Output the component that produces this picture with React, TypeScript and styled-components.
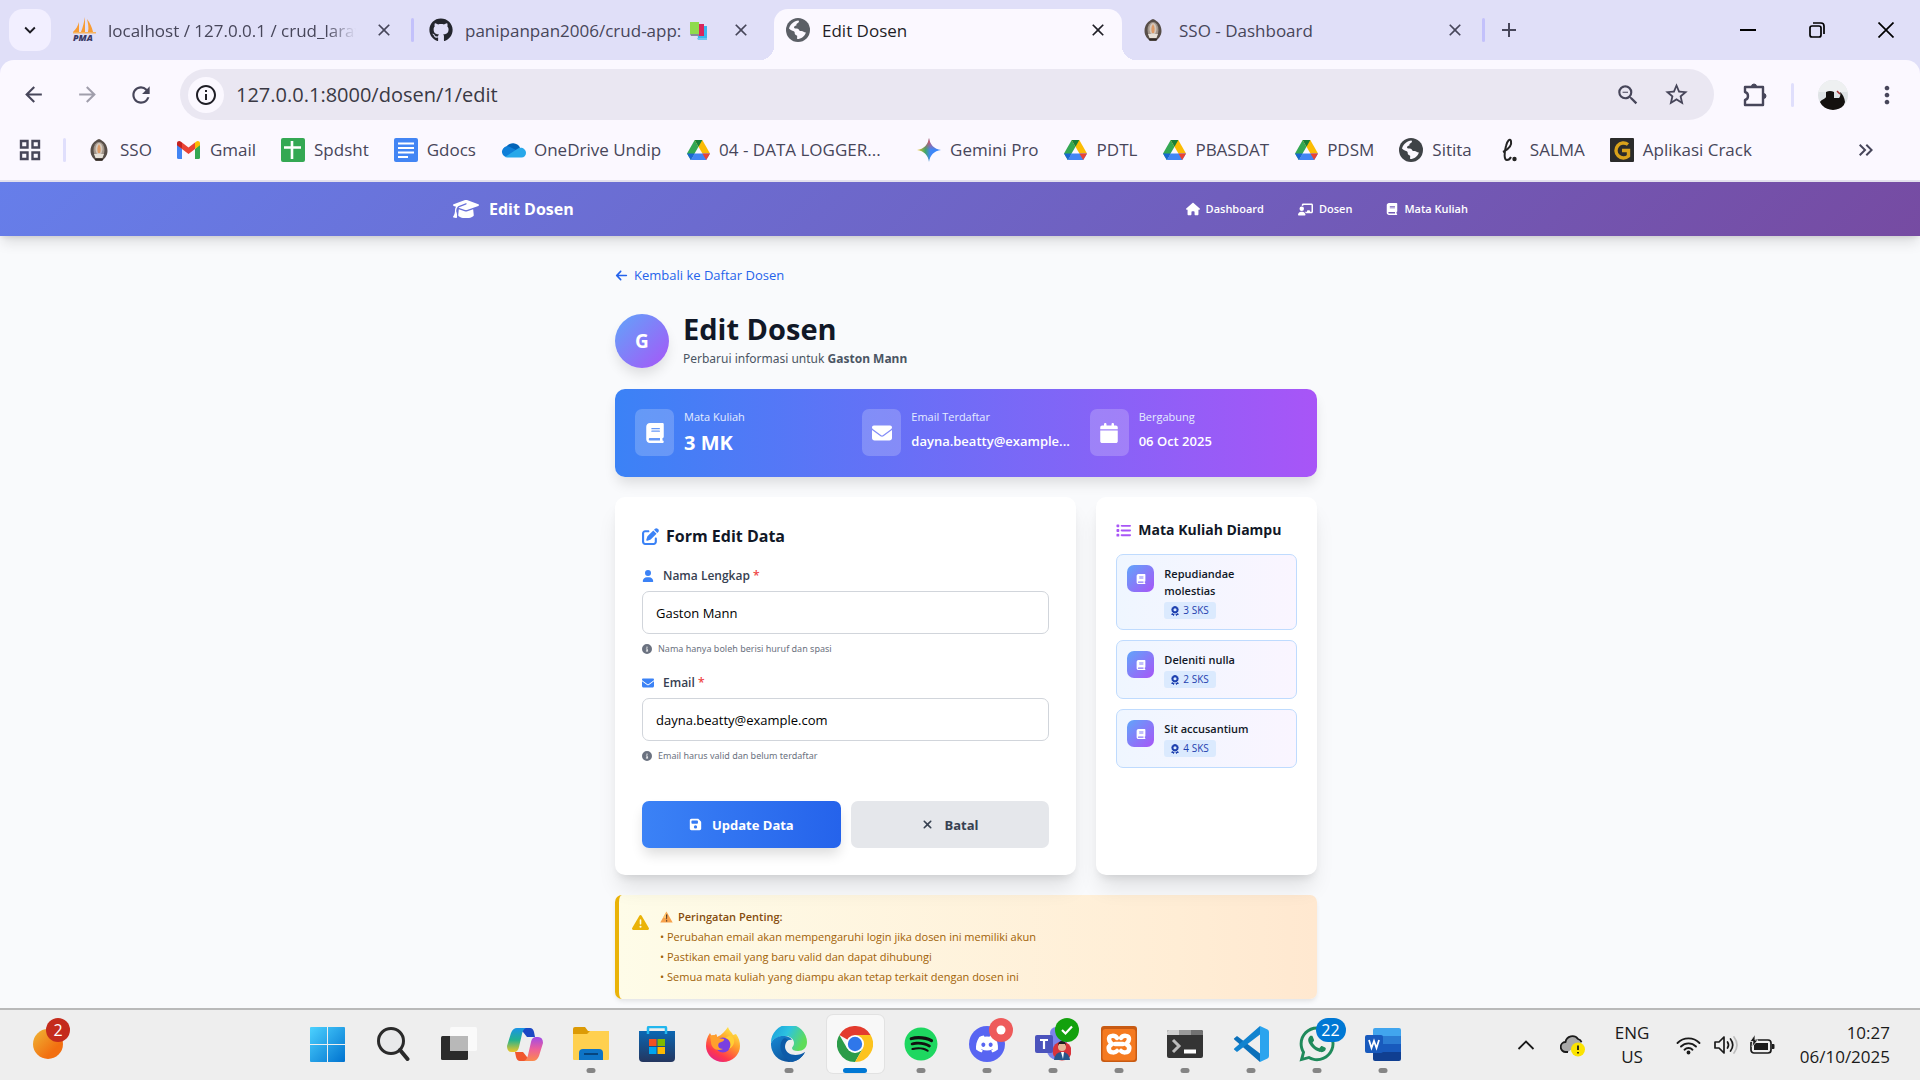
import React, { useState } from "react";
import styled, { createGlobalStyle, css } from "styled-components";
import {
  FaArrowLeft,
  FaAward,
  FaBook,
  FaCalendar,
  FaChalkboardUser,
  FaCircleInfo,
  FaEnvelope,
  FaFloppyDisk,
  FaGraduationCap,
  FaHouse,
  FaList,
  FaPenToSquare,
  FaTriangleExclamation,
  FaUser,
  FaXmark,
} from "react-icons/fa6";
import { FaGithub, FaSpotify, FaDiscord, FaWhatsapp } from "react-icons/fa";
import { SiXampp } from "react-icons/si";
import { VscVscode } from "react-icons/vsc";
import {
  MdArrowBack,
  MdArrowForward,
  MdClose,
  MdAdd,
  MdInfoOutline,
  MdMoreVert,
  MdRefresh,
  MdStarBorder,
  MdOutlineZoomOut,
  MdKeyboardArrowDown,
  MdKeyboardDoubleArrowRight,
} from "react-icons/md";

const uiFont = `"Open Sans", "Noto Sans", sans-serif`;
const wideFont = `"Noto Sans", "Open Sans", sans-serif`;

const GlobalStyle = createGlobalStyle`
  *, *::before, *::after { box-sizing: border-box; }
  body { margin: 0; font-family: ${uiFont}; color: #111827; }
  h1, h2, p, ul, dl, dd, dt { margin: 0; padding: 0; }
  ul { list-style: none; }
  a { color: inherit; text-decoration: none; }
  button { font-family: inherit; color: inherit; border: 0; padding: 0; background: none; cursor: pointer; }
  input { font-family: inherit; }
  svg { display: block; flex: none; }
`;

const Screen = styled.div`
  display: flex;
  flex-direction: column;
  min-height: 100vh;
  overflow: hidden;
`;

/* ---------- browser frame ---------- */

const TabStrip = styled.div`
  display: flex;
  align-items: flex-start;
  height: 60px;
  padding: 9px 0 0 9px;
  background: #e0dff8;
`;

const TabSearch = styled.button`
  display: grid;
  place-items: center;
  width: 42px;
  height: 42px;
  margin-right: 9px;
  border-radius: 14px;
  background: #f2efff;
  color: #1c1b22;
`;

const TabSlot = styled.div`
  display: flex;
  width: 357px;
  height: 51px;
  min-width: 0;
`;

const TabBody = styled.div<{ $active?: boolean }>`
  position: relative;
  display: flex;
  align-items: center;
  width: 348px;
  height: 100%;
  padding: 0 12px 9px 12px;
  color: ${(p) => (p.$active ? "#1f1e26" : "#47465a")};
  ${(p) =>
    p.$active &&
    css`
      background: #fbf8ff;
      border-radius: 14px 14px 0 0;
      &::before,
      &::after {
        content: "";
        position: absolute;
        bottom: 0;
        width: 14px;
        height: 14px;
      }
      &::before {
        left: -14px;
        background: radial-gradient(circle at 0 0, transparent 14px, #fbf8ff 14px);
      }
      &::after {
        right: -14px;
        background: radial-gradient(circle at 100% 0, transparent 14px, #fbf8ff 14px);
      }
    `}
`;

const TabIcon = styled.span`
  display: grid;
  place-items: center start;
  width: 36px;
  height: 26px;
`;

const TabTitle = styled.span<{ $fade?: boolean }>`
  display: flex;
  align-items: center;
  flex: 1;
  min-width: 0;
  gap: 8px;
  overflow: hidden;
  margin-right: 16px;
  padding-top: 2px;
  font-size: 17px;
  line-height: 26px;
  white-space: nowrap;
  ${(p) => p.$fade && "mask-image: linear-gradient(90deg, #000 88%, transparent);"}
`;

const CloseTab = styled.button`
  display: grid;
  place-items: center;
  width: 24px;
  height: 24px;
`;

const TabDivider = styled.span`
  width: 3px;
  height: 24px;
  margin: 9px 0 0 3px;
  border-radius: 2px;
  background: #c3c1fb;
`;

const NewTab = styled.button`
  display: grid;
  place-items: center;
  width: 42px;
  height: 42px;
  color: #47465a;
`;

const WindowControls = styled.div`
  display: flex;
  margin-left: auto;
`;

const WindowButton = styled.button`
  display: grid;
  place-items: center;
  width: 69px;
  height: 42px;
`;

const BrowserPanel = styled.div`
  background: #e0dff8;
`;

const BrowserPanelInner = styled.div`
  border-radius: 14px 14px 0 0;
  border-bottom: 2px solid #e4e1ee;
  background: #fbf8ff;
`;

const Toolbar = styled.div`
  display: flex;
  align-items: center;
  padding: 9px 10px 0 6px;
  color: #47465a;
`;

const ToolButton = styled.button<{ $dim?: boolean }>`
  display: grid;
  place-items: center;
  width: 54px;
  height: 51px;
  opacity: ${(p) => (p.$dim ? 0.5 : 1)};
`;

const SmallToolButton = styled(ToolButton)`
  width: 46px;
`;

const Omnibox = styled.form`
  display: flex;
  align-items: center;
  flex: 1;
  height: 51px;
  margin: 0 18px 0 12px;
  padding: 0 14px 0 8px;
  border-radius: 26px;
  background: #eae7f2;
`;

const SiteInfo = styled.button`
  display: grid;
  place-items: center;
  width: 36px;
  height: 36px;
  margin-right: 12px;
  border-radius: 50%;
  background: #fbf8ff;
  color: #1f1e26;
`;

const Address = styled.input`
  flex: 1;
  min-width: 0;
  padding: 0;
  border: 0;
  outline: 0;
  background: transparent;
  color: #3a3944;
  font-size: 20px;
  line-height: 26px;
`;

const OmniButton = styled.button`
  display: grid;
  place-items: center;
  width: 48px;
  height: 36px;
`;

const BarDivider = styled.span<{ $before: number; $after: number }>`
  width: 3px;
  height: 24px;
  margin: 0 ${(p) => p.$after}px 0 ${(p) => p.$before}px;
  border-radius: 2px;
  background: #e0dffc;
`;

const ProfileButton = styled.button`
  width: 30px;
  height: 30px;
  margin-right: 16px;
  border-radius: 50%;
  overflow: hidden;
`;

const BookmarkBar = styled.nav`
  display: flex;
  align-items: center;
  height: 60px;
  padding: 0 42px 0 18px;
  color: #47465a;
`;

const BookmarkList = styled.ul`
  display: flex;
  flex: 1;
  gap: 25px;
  min-width: 0;
`;

const BookmarkLink = styled.a<{ $capped?: boolean }>`
  display: flex;
  align-items: center;
  gap: 9px;
  ${(p) => p.$capped && "width: 206px;"}
  font-size: 17px;
  line-height: 24px;
  white-space: nowrap;
`;

const BookmarkIcon = styled.span`
  display: grid;
  place-items: center;
  width: 24px;
  height: 24px;
`;

/* ---------- page ---------- */

const Page = styled.div`
  display: flex;
  flex-direction: column;
  flex: 1;
  background: #f9fafc;
`;

const SiteNav = styled.nav`
  background: linear-gradient(135deg, #667eea 0%, #764ba2 100%);
  box-shadow: 0 8px 13px -2px rgba(0, 0, 0, 0.12), 0 3px 5px -2px rgba(0, 0, 0, 0.1);
  color: #ffffff;
`;

const SiteNavInner = styled.div`
  display: flex;
  align-items: center;
  justify-content: space-between;
  max-width: 1072px;
  height: 54px;
  margin: 0 auto;
  padding: 0 28px 0 29px;
`;

const Brand = styled.a`
  display: flex;
  align-items: center;
  gap: 10px;
  font-size: 16px;
  font-weight: 700;
  line-height: 24px;
`;

const NavLinks = styled.ul`
  display: flex;
  gap: 34px;
`;

const NavLink = styled.a`
  display: flex;
  align-items: center;
  gap: 6px;
  font-size: 11px;
  font-weight: 600;
  line-height: 20px;
`;

const Main = styled.main`
  width: 100%;
  max-width: 714px;
  margin: 0 auto;
  padding: 29px 0 7px 12px;
`;

const BackLink = styled.a`
  display: flex;
  align-items: center;
  gap: 6px;
  width: max-content;
  color: #2563eb;
  font-size: 13px;
  font-weight: 500;
  line-height: 20px;
`;

const PageHeader = styled.header`
  display: flex;
  align-items: center;
  gap: 14px;
  margin-top: 27px;
`;

const Avatar = styled.div`
  display: grid;
  place-items: center;
  width: 54px;
  height: 54px;
  border-radius: 50%;
  background: linear-gradient(135deg, #60a5fa, #a855f7);
  box-shadow: 0 8px 13px -2px rgba(0, 0, 0, 0.12);
  color: #ffffff;
  font-size: 19px;
  font-weight: 700;
`;

const Title = styled.h1`
  font-size: 29px;
  font-weight: 700;
  line-height: 34px;
`;

const Subtitle = styled.p`
  margin-top: 3px;
  color: #4b5563;
  font-family: ${wideFont};
  font-size: 12px;
  line-height: 20px;
`;

const StatsBar = styled.dl`
  display: grid;
  grid-template-columns: repeat(3, minmax(0, 1fr));
  gap: 20px;
  margin-top: 20px;
  padding: 20px;
  border-radius: 10px;
  background: linear-gradient(90deg, #3b82f6, #a855f7);
  box-shadow: 0 8px 13px -2px rgba(0, 0, 0, 0.12);
  color: #ffffff;
`;

const Stat = styled.div`
  display: grid;
  grid-template-columns: auto minmax(0, 1fr);
  column-gap: 10px;
  align-items: start;
`;

const StatIcon = styled.span`
  display: grid;
  place-items: center;
  width: 39px;
  height: 47px;
  border-radius: 7px;
  background: rgba(255, 255, 255, 0.2);
`;

const StatLabel = styled.dt`
  margin-bottom: 4px;
  color: #e4ecff;
  font-size: 11px;
  line-height: 16px;
`;

const StatValue = styled.dd<{ $large?: boolean }>`
  font-size: ${(p) => (p.$large ? 20 : 13)}px;
  font-weight: ${(p) => (p.$large ? 700 : 600)};
  line-height: ${(p) => (p.$large ? 28 : 24)}px;
  white-space: nowrap;
`;

const Columns = styled.div`
  display: grid;
  grid-template-columns: repeat(3, minmax(0, 1fr));
  gap: 20px;
  margin-top: 20px;
`;

const cardStyle = css`
  border-radius: 10px;
  background: #ffffff;
  box-shadow: 0 16px 21px -4px rgba(0, 0, 0, 0.1), 0 6px 8px -4px rgba(0, 0, 0, 0.1);
`;

const FormCard = styled.form`
  ${cardStyle}
  grid-column: span 2;
  padding: 26px 27px 27px;
`;

const SideCard = styled.section`
  ${cardStyle}
  padding: 20px;
`;

const CardTitle = styled.h2`
  display: flex;
  align-items: center;
  gap: 7px;
  font-size: 16px;
  font-weight: 700;
  line-height: 26px;
`;

const SideTitle = styled(CardTitle)`
  margin-bottom: 11px;
  font-size: 14px;
`;

const Field = styled.div`
  margin-top: 16px;

  ${CardTitle} + & {
    margin-top: 17px;
  }
`;

const FieldLabel = styled.label`
  display: flex;
  align-items: center;
  gap: 9px;
  margin-bottom: 5px;
  color: #374151;
  font-size: 12px;
  font-weight: 600;
  line-height: 20px;
`;

const Required = styled.span`
  color: #ef4444;
`;

const TextInput = styled.input`
  width: 100%;
  height: 43px;
  padding: 0 13px;
  border: 1px solid #d1d5db;
  border-radius: 7px;
  outline: 0;
  background: #ffffff;
  color: #000000;
  font-size: 13px;
  line-height: 20px;
`;

const Help = styled.p`
  display: flex;
  align-items: center;
  gap: 6px;
  margin-top: 7px;
  color: #6b7280;
  font-family: ${wideFont};
  font-size: 9px;
  line-height: 16px;
`;

const Actions = styled.div`
  display: grid;
  grid-template-columns: 1fr 1fr;
  gap: 10px;
  margin-top: 37px;
`;

const ActionButton = styled.button<{ $primary?: boolean }>`
  display: flex;
  align-items: center;
  justify-content: center;
  gap: 10px;
  height: 47px;
  border-radius: 7px;
  font-size: 13px;
  font-weight: 700;
  line-height: 20px;
  ${(p) =>
    p.$primary
      ? css`
          background: linear-gradient(90deg, #3b82f6, #2563eb);
          box-shadow: 0 8px 13px -2px rgba(0, 0, 0, 0.14);
          color: #ffffff;
        `
      : css`
          background: #e5e7eb;
          color: #374151;
        `}
`;

const CourseList = styled.ul`
  display: grid;
  gap: 10px;
`;

const Course = styled.li`
  display: flex;
  align-items: flex-start;
  gap: 10px;
  padding: 10px;
  border: 1px solid #bfdbfe;
  border-radius: 7px;
  background: linear-gradient(90deg, #eff6ff, #faf5ff);
`;

const CourseIcon = styled.span`
  display: grid;
  place-items: center;
  flex: none;
  width: 27px;
  height: 27px;
  border-radius: 7px;
  background: linear-gradient(135deg, #60a5fa, #a855f7);
  color: #ffffff;
`;

const CourseName = styled.p`
  font-size: 11px;
  font-weight: 600;
  line-height: 17px;
`;

const Credits = styled.span`
  display: flex;
  align-items: center;
  gap: 3px;
  width: max-content;
  height: 17px;
  margin-top: 3px;
  padding: 0 7px 0 6px;
  border-radius: 3px;
  background: #dbeafe;
  color: #1e40af;
  font-size: 10px;
  font-weight: 500;
  line-height: 17px;
`;

const Warning = styled.aside`
  display: flex;
  gap: 11px;
  margin-top: 20px;
  padding: 12px 13px;
  border-left: 4px solid #eab308;
  border-radius: 7px;
  background: linear-gradient(90deg, #fefce8, #ffedd5 80%, #ffe8d0);
  box-shadow: 0 3px 5px -1px rgba(0, 0, 0, 0.1);
  color: #a16207;
  font-size: 11px;
  line-height: 20px;
`;

const WarningIcon = styled.span`
  margin-top: 7px;
  color: #eab308;
`;

const WarningTitle = styled.p`
  display: flex;
  align-items: center;
  gap: 5px;
  color: #854d0e;
  font-weight: 600;
`;

/* ---------- taskbar ---------- */

const Taskbar = styled.footer`
  display: flex;
  height: 72px;
  border-top: 2px solid #b9b9b9;
  background: #eeeeee;
  color: #1a1a1a;
`;

const WidgetArea = styled.div`
  width: 294px;
  padding: 7px 0 0 30px;
`;

const AppList = styled.ul`
  display: flex;
`;

const AppSlot = styled.li`
  display: flex;
  justify-content: center;
  width: 66px;
  padding-top: 5px;
`;

const AppButton = styled.button<{ $active?: boolean }>`
  position: relative;
  display: grid;
  place-items: center;
  width: 57px;
  height: 58px;
  border-radius: 6px;
  ${(p) => p.$active && "background: #f8f8f8; box-shadow: 0 0 0 1px #e2e2e2;"}
`;

const Indicator = styled.span<{ $active?: boolean }>`
  position: absolute;
  bottom: 0;
  left: 50%;
  width: ${(p) => (p.$active ? 24 : 9)}px;
  height: 5px;
  border-radius: 3px;
  background: ${(p) => (p.$active ? "#0078d4" : "#858585")};
  transform: translateX(-50%);
`;

const Badge = styled.span<{ $color: string; $wide?: boolean }>`
  position: absolute;
  top: 3px;
  right: ${(p) => (p.$wide ? 0 : 3)}px;
  display: grid;
  place-items: center;
  width: ${(p) => (p.$wide ? 30 : 24)}px;
  height: 24px;
  border-radius: 12px;
  background: ${(p) => p.$color};
  color: #ffffff;
  font-size: 16px;
  line-height: 24px;
`;

const WidgetButton = styled.button`
  position: relative;
  display: block;
  width: 43px;
  height: 46px;
`;

const WidgetBadge = styled(Badge)`
  top: 1px;
`;

const Tray = styled.div`
  display: flex;
  align-items: center;
  margin-left: auto;
  padding-right: 30px;
`;

const TrayButton = styled.button<{ $width: number }>`
  display: grid;
  place-items: center;
  width: ${(p) => p.$width}px;
  height: 48px;
`;

const TrayText = styled.button<{ $width: number; $end?: boolean }>`
  width: ${(p) => p.$width}px;
  font-size: 17px;
  line-height: 24px;
  text-align: ${(p) => (p.$end ? "right" : "center")};
`;

/* ---------- drawings ---------- */

const CrestIcon = () => (
  <svg width="20" height="24" viewBox="0 0 20 24">
    <path d="M10 1C15 3 18.500 7 18.500 13c0 5-3.500 8-5.500 10H7c-2-2-5.500-5-5.500-10C1.500 7 5 3 10 1Z" fill="#574e48" />
    <ellipse cx="10" cy="12" rx="5.500" ry="8" fill="#a3978c" />
    <ellipse cx="10" cy="11" rx="3.500" ry="6" fill="#d3c8bc" />
    <path d="M10 6c2 3 2 6 1 9H9C8 12 8 9 10 6Z" fill="#dd9a66" />
    <path d="M5 16h10l-1.500 4h-7z" fill="#e7e1d8" />
    <path d="M6 21.500h8" stroke="#2f2926" strokeWidth="1.500" />
  </svg>
);

const PmaIcon = () => (
  <svg width="26" height="26" viewBox="0 0 26 26">
    <path d="M13 0v15H9C11 10 12 5 13 0Z M15 2c3 4 5 8 6 13h-5C17 11 16 6 15 2Z M7 5v10H1C4 12 6 9 7 5Z" fill="#f89c33" />
    <path d="M1 15h23v1.500H1z" fill="#f6b35f" />
    <text x="1" y="24" fontFamily="Open Sans, sans-serif" fontWeight="800" fontStyle="italic" fontSize="9" fill="#3b3a66">
      PMA
    </text>
  </svg>
);

const BooksIcon = () => (
  <svg width="19" height="20" viewBox="0 0 19 20">
    <path d="M8 5h10v13H9z" fill="#38b6ef" />
    <path d="M5 3h10v12H6z" fill="#d8265c" />
    <path d="M1 1h9v12H1z" fill="#8fdb4d" />
    <path d="M1 13h9v2H2z" fill="#888b9a" />
    <path d="M8 17h10v2H9z" fill="#6cc6f0" />
  </svg>
);

const GlobeIcon = ({ color, land }: { color: string; land: string }) => (
  <svg width="24" height="24" viewBox="0 0 24 24">
    <circle cx="12" cy="12" r="12" fill={color} />
    <path
      d="M3 10.500C4.500 6 8 3 12.500 2.600c1 .9.400 1.900-.6 2.400-1.400.6-1.600 1.400-1.500 2.500-1.600.3-2.500 1-2.300 2.500.8.900 4 .1 4.700 1.400.6 1.200 1.200 1.700 2.700 1.500 1.700 0 2.300 1.500 4.400 1.700-1.300 4-4.600 6.500-8.700 6.500-.3-1.300.2-2.200-.1-3.300-1-1-2.600-1.100-2.400-2.800.1-1.200-.5-1.700-1.700-2.100C5.500 12.500 4 11.500 3 10.500Z"
      fill={land}
    />
  </svg>
);

const GmailIcon = () => (
  <svg width="23" height="18" viewBox="0 0 23 18">
    <path d="M0 3v13.500Q0 18 1.500 18H5V8Z" fill="#4285f4" />
    <path d="M23 3v13.500q0 1.500-1.500 1.500H18V8Z" fill="#34a853" />
    <path d="M18 1.500V8l5-3.800V2.500C23 0 20.500-.5 19 .8Z" fill="#fbbc04" />
    <path d="M0 4.200 5 8V1.500L4 .8C2.500-.5 0 0 0 2.500Z" fill="#c5221f" />
    <path d="M5 1.500 11.500 6.500 18 1.500V8l-6.500 5L5 8Z" fill="#ea4335" />
  </svg>
);

const SheetIcon = () => (
  <svg width="24" height="24" viewBox="0 0 24 24">
    <rect width="24" height="24" rx="2" fill="#34a853" />
    <path d="M11 3v18M3 9.500h17" stroke="#fff" strokeWidth="2.600" />
  </svg>
);

const DocIcon = () => (
  <svg width="24" height="24" viewBox="0 0 24 24">
    <rect width="24" height="24" rx="2" fill="#4285f4" />
    <path d="M4 5.500h16M4 10h16M4 14.500h16M4 19h10" stroke="#fff" strokeWidth="2.200" />
  </svg>
);

const OneDriveIcon = () => (
  <svg width="25" height="16" viewBox="0 0 25 16">
    <path d="M6 15a5.500 5.500 0 0 1-.5-10.500A8 8 0 0 1 19 5.500L13 12Z" fill="#0364b8" />
    <path d="M2 13a5.500 5.500 0 0 1 7-8l10 5-6 5H6Q3.500 15 2 13Z" fill="#0f7fd8" />
    <path d="M4 15l13-8.500c3-2 8 0 8 4.500a4.500 4.500 0 0 1-4.500 4.500H6Z" fill="#28a8ea" />
  </svg>
);

const DriveIcon = () => (
  <svg width="23" height="20" viewBox="0 0 23 20">
    <path d="M7.700 0 0 13.500 3.800 20 11.500 6.700Z" fill="#34a853" />
    <path d="M7.700 0h7.600L23 13.500h-7.600Z" fill="#fbbc04" />
    <path d="M7.700 0h7.600l-3.800 6.700Z" fill="#188038" />
    <path d="M7.700 13.500H23L19.200 20H3.800Z" fill="#4285f4" />
    <path d="M0 13.500h7.700L3.800 20Z" fill="#1967d2" />
    <path d="M15.400 13.500H23L19.200 20Z" fill="#ea4335" />
  </svg>
);

const GeminiIcon = () => (
  <svg width="24" height="24" viewBox="0 0 24 24">
    <defs>
      <linearGradient id="gem" x1="0" y1="0" x2="1" y2="0">
        <stop offset="0" stopColor="#f7c51e" />
        <stop offset=".35" stopColor="#3fa66b" />
        <stop offset=".55" stopColor="#4187f5" />
        <stop offset="1" stopColor="#3186ff" />
      </linearGradient>
      <linearGradient id="gemTop" x1="0" y1="0" x2="0" y2="1">
        <stop offset="0" stopColor="#ff4641" />
        <stop offset=".5" stopColor="#ff4641" stopOpacity="0" />
      </linearGradient>
    </defs>
    <path d="M12 0c1 7 5 11 12 12-7 1-11 5-12 12-1-7-5-11-12-12C7 11 11 7 12 0Z" fill="url(#gem)" />
    <path d="M12 0c1 7 5 11 12 12-7 1-11 5-12 12-1-7-5-11-12-12C7 11 11 7 12 0Z" fill="url(#gemTop)" />
  </svg>
);

const SalmaIcon = () => (
  <svg width="16" height="24" viewBox="0 0 16 24" fill="none" stroke="#242424" strokeWidth="2">
    <path d="M2 14C8 11 11 7 10 3 9 0 6 3 5 8c-2 7-2 14 1 14 2 0 3-1 4-3" />
    <circle cx="13.500" cy="21" r="1.200" fill="#242424" />
  </svg>
);

const CrackIcon = () => (
  <svg width="24" height="24" viewBox="0 0 24 24">
    <rect width="24" height="24" rx="1" fill="#2b2b2b" />
    <path d="M18 6.500A7.500 7.500 0 1 0 18.500 18V12.500H12" fill="none" stroke="#d9a21b" strokeWidth="3.400" />
  </svg>
);

const AppsGridIcon = () => (
  <svg width="24" height="24" viewBox="0 0 24 24" fill="none" stroke="#47465a" strokeWidth="2.400">
    <path d="M3 3h6.500v6.500H3zM14.500 3H21v6.500h-6.500zM3 14.500h6.500V21H3zM14.500 14.500H21V21h-6.500z" />
  </svg>
);

const ProfilePhoto = () => (
  <svg width="30" height="30" viewBox="0 0 30 30">
    <rect width="30" height="30" fill="#dfe3e6" />
    <path d="M0 0h30v12H0z" fill="#eef0f1" />
    <path d="M2 22c2-3 5-3 6-5V12q4-2 8 0v6h5q2-2 1-6 4 3 5 10l-3 8H5Z" fill="#14110f" />
    <path d="M19 11l3 3" stroke="#a83232" strokeWidth="1.500" />
  </svg>
);

const WarningEmoji = () => (
  <svg width="13" height="12" viewBox="0 0 13 12">
    <path d="M6.500.5 12.700 11.500H.3Z" fill="#f7a14b" />
    <path d="M6.500.5 3 7h3Z" fill="#ffc56a" />
    <path d="M6 3.500h1.300L7 8.300h-.7ZM6 9.300h1.200v1.200H6Z" fill="#4b3428" />
  </svg>
);

const WindowsLogo = () => (
  <svg width="35" height="35" viewBox="0 0 35 35">
    <defs>
      <linearGradient id="win" x1="0" y1="0" x2="1" y2="1">
        <stop offset="0" stopColor="#4cd2ff" />
        <stop offset="1" stopColor="#0072cf" />
      </linearGradient>
    </defs>
    <path d="M1 0h16v17H0V1q0-1 1-1ZM18 0h16q1 0 1 1v16H18ZM0 18h17v17H1q-1 0-1-1ZM18 18h17v16q0 1-1 1H18Z" fill="url(#win)" />
  </svg>
);

const SearchLogo = () => (
  <svg width="34" height="34" viewBox="0 0 34 34">
    <circle cx="15" cy="14" r="12.500" fill="#e8e9ea" stroke="#2a2a2a" strokeWidth="3" />
    <path d="m24 23 7.500 9" stroke="#2a2a2a" strokeWidth="4" strokeLinecap="round" />
  </svg>
);

const TaskViewLogo = () => (
  <svg width="36" height="36" viewBox="0 0 36 36">
    <rect x="0" y="10" width="27" height="24" rx="1.500" fill="#2b2b2b" />
    <rect x="9" y="1" width="27" height="24" rx="1.500" fill="#fbfbfb" opacity=".9" />
    <path d="M9 10h18v15H9z" fill="#b8b8b8" />
  </svg>
);

const CopilotLogo = () => (
  <svg width="36" height="33" viewBox="0 0 36 33">
    <defs>
      <linearGradient id="cpA" x1="0" y1="0" x2="0" y2="1">
        <stop offset="0" stopColor="#1a93e8" />
        <stop offset=".5" stopColor="#22b28f" />
        <stop offset="1" stopColor="#f0c624" />
      </linearGradient>
      <linearGradient id="cpB" x1="0" y1="0" x2="0" y2="1">
        <stop offset="0" stopColor="#a04be8" />
        <stop offset=".5" stopColor="#ec5f9b" />
        <stop offset="1" stopColor="#fb8a4c" />
      </linearGradient>
    </defs>
    <path d="M10 0h13q3 0 4 4l1 5h-8L16 4Z" fill="#1b48c4" />
    <path d="M10 0h9q-3 1-4 6l-3 13q-1 5-5 5H5q-5 0-5-6L4 5Q6 0 10 0Z" fill="url(#cpA)" />
    <path d="M26 33H13q-3 0-4-4l-1-5h8l4 5Z" fill="#f0562d" />
    <path d="M26 33h-9q3-1 4-6l3-13q1-5 5-5h2q5 0 5 6l-4 13q-2 5-6 5Z" fill="url(#cpB)" />
  </svg>
);

const ExplorerLogo = () => (
  <svg width="36" height="34" viewBox="0 0 36 34">
    <path d="M0 2q0-2 2-2h10l3 4h19q2 0 2 2v8H0Z" fill="#dc9a05" />
    <path d="M0 7h14l3-3h19v28q0 1-1 1H1q-1 0-1-1Z" fill="#ffd04f" />
    <path d="M6 33v-7q0-4 4-4h16q4 0 4 4v7Z" fill="#0e74c6" />
    <path d="M11 27h14" stroke="#06457e" strokeWidth="2" />
  </svg>
);

const StoreLogo = () => (
  <svg width="36" height="36" viewBox="0 0 36 36">
    <defs>
      <linearGradient id="store" x1="0" y1="0" x2="0" y2="1">
        <stop offset="0" stopColor="#0b67b3" />
        <stop offset="1" stopColor="#24365f" />
      </linearGradient>
    </defs>
    <path d="M0 5h36v27q0 4-4 4H4q-4 0-4-4Z" fill="url(#store)" />
    <path d="M9 8V2q0-1 1-1h16q1 0 1 1v6" fill="none" stroke="#22b7ee" strokeWidth="2.500" />
    <path d="M10 13h7.500v7H10z" fill="#f25022" />
    <path d="M18.500 13H26v7h-7.500z" fill="#7fba00" />
    <path d="M10 21h7.500v7H10z" fill="#00a4ef" />
    <path d="M18.500 21H26v7h-7.500z" fill="#ffb900" />
  </svg>
);

const FirefoxLogo = () => (
  <svg width="34" height="35" viewBox="0 0 34 35">
    <defs>
      <linearGradient id="ff" x1=".8" y1="0" x2=".2" y2="1">
        <stop offset="0" stopColor="#fff14a" />
        <stop offset=".4" stopColor="#ff9a2b" />
        <stop offset=".75" stopColor="#ff3a4b" />
        <stop offset="1" stopColor="#e0208f" />
      </linearGradient>
    </defs>
    <path d="M22 0c1 4 4 5 5 8l3-1c3 4 4 8 4 12a17 16 0 0 1-34 0c0-5 1-9 4-13l2 4 4-3c1 1 1 2 1 3 5-2 8-6 11-10Z" fill="url(#ff)" />
    <circle cx="17" cy="18" r="7.500" fill="#7a3fe0" />
    <path d="M4 9c3-2 6-1 8 2l6 1c1 2-3 3-5 4-2 3 0 6 4 6-6 3-12-1-12-7Z" fill="#ffa02d" />
    <path d="M19 11c6 1 7 7 4 11 6-3 7-10 2-14Z" fill="#ffcf35" />
  </svg>
);

const EdgeLogo = () => (
  <svg width="36" height="36" viewBox="0 0 36 36">
    <defs>
      <linearGradient id="edTop" x1="0" y1="0" x2="1" y2=".4">
        <stop offset="0" stopColor="#169bdc" />
        <stop offset=".5" stopColor="#2dc3e0" />
        <stop offset="1" stopColor="#5fdc5a" />
      </linearGradient>
      <linearGradient id="edLow" x1="0" y1="0" x2="1" y2="1">
        <stop offset="0" stopColor="#168ad6" />
        <stop offset="1" stopColor="#0b3f86" />
      </linearGradient>
    </defs>
    <path d="M0 17A18 18 0 0 1 36 16c0 6-4 9-9 9-4 0-6-1-6-3 0-1 2-2 2-5 0-4-4-7-9-7C8 10 3 12 0 17Z" fill="url(#edTop)" />
    <path d="M0 17c3-5 7-7 12-7 5 0 8 2 9 4-5-1-8 3-8 8 0 7 6 11 13 9 3-1 6-3 8-5-3 6-9 10-16 10A18 18 0 0 1 0 17Z" fill="url(#edLow)" />
    <path d="M12 13c-4 5-3 12 1 17 2 3 5 5 8 6 5-1 10-4 13-10-7 5-19 4-20-5 0-3 1-5 3-7-2-2-4-2-5-1Z" fill="#0d5ba8" />
  </svg>
);

const ChromeLogo = () => (
  <svg width="36" height="36" viewBox="0 0 36 36">
    <path d="M18 18 2.400 9A18 18 0 0 1 33.600 9Z" fill="#e33b2e" />
    <path d="M2.400 9 10.200 22.500 18 27l3-1-3 10A18 18 0 0 1 2.400 9Z" fill="#2b9c49" />
    <path d="M10.200 22.500 18 27l7.800-4.500L18 36Z" fill="#2b9c49" />
    <path d="M25.800 22.500 18 36A18 18 0 0 0 33.600 9H18Z" fill="#fcc31e" />
    <circle cx="18" cy="18" r="9" fill="#fff" />
    <circle cx="18" cy="18" r="7.200" fill="#2f77ea" />
  </svg>
);

const SpotifyLogo = () => (
  <svg width="34" height="34" viewBox="0 0 34 34">
    <circle cx="17" cy="17" r="15" fill="#111" />
    <FaSpotify size={34} color="#1ed760" />
  </svg>
);

const DiscordLogo = () => (
  <svg width="36" height="36" viewBox="0 0 36 36">
    <circle cx="18" cy="18" r="18" fill="#5865f2" />
    <FaDiscord x="6" y="6" size={24} color="#fff" />
  </svg>
);

const TeamsLogo = () => (
  <svg width="36" height="36" viewBox="0 0 36 36">
    <circle cx="21" cy="7" r="6" fill="#7b83eb" />
    <path d="M12 12h20v12a10 10 0 0 1-20 0Z" fill="#7b83eb" />
    <circle cx="27" cy="25" r="9.500" fill="#d8343b" />
    <circle cx="27" cy="21" r="4" fill="#e6b79b" />
    <path d="M23 20q0-5 4-5t4 5l-1-2h-6Z" fill="#1d1d22" />
    <path d="M19 34q1-8 8-8t8 8Z" fill="#28568c" />
    <path d="M26 26h3l-1 7Z" fill="#fff" />
    <rect x="0" y="9" width="18" height="18" rx="2" fill="#4b53bc" />
    <path d="M5 14h8M9 14v9" stroke="#fff" strokeWidth="2.200" />
  </svg>
);

const XamppLogo = () => (
  <svg width="36" height="36" viewBox="0 0 36 36">
    <rect width="36" height="36" rx="3" fill="#c85a12" />
    <rect x="1.500" y="3" width="33" height="31.500" rx="3" fill="#f57a20" />
    <g fill="none" stroke="#fff" strokeWidth="4.500" strokeLinecap="round" strokeLinejoin="round">
      <path d="M16 12c-2-3-8-3-8 1 0 3 2 4 3 5-2 1-4 3-3 6 1 3 6 3 8 1" />
      <path d="M20 12c2-3 8-3 8 1 0 3-2 4-3 5 2 1 4 3 3 6-1 3-6 3-8 1" />
      <path d="M14 18h8" />
    </g>
  </svg>
);

const TerminalLogo = () => (
  <svg width="36" height="28" viewBox="0 0 36 28">
    <rect width="36" height="28" rx="2" fill="#343434" />
    <path d="M0 2q0-2 2-2h10v5H0Z" fill="#d0d0d0" />
    <path d="M12 0h12v5H12z" fill="#9a9a9a" />
    <path d="M24 0h10q2 0 2 2v3H24Z" fill="#727272" />
    <path d="m6 10 6 6-6 6" fill="none" stroke="#bcbcbc" strokeWidth="3" />
    <path d="M17 21.500h12" stroke="#fff" strokeWidth="4" />
  </svg>
);

const CodeLogo = () => (
  <svg width="36" height="36" viewBox="0 0 36 36">
    <path d="M27 0 8 18l19 18 1-.5V.5Z" fill="#0a6db5" opacity="0" />
    <path d="M1 12.500 4 10l23 17.500V36L1.500 13.800Q.5 13 1 12.500Z" fill="#0b70ba" />
    <path d="M1 23.500 4 26 27 8.500V0L1.500 22.200Q.5 23 1 23.500Z" fill="#1183cf" />
    <path d="M27 0 34.500 3.500Q36 4.200 36 6v24q0 1.800-1.500 2.500L27 36Z" fill="#2ba4ee" />
  </svg>
);

const WhatsappLogo = () => <FaWhatsapp size={40} color="#1f8a5b" />;

const WordLogo = () => (
  <svg width="36" height="33" viewBox="0 0 36 33">
    <path d="M8 2q0-2 2-2h24q2 0 2 2v6H8Z" fill="#41a5ee" />
    <path d="M8 8h28v8H8z" fill="#2b7cd3" />
    <path d="M8 16h28v8H8z" fill="#185abd" />
    <path d="M8 24h28v7q0 2-2 2H10q-2 0-2-2Z" fill="#103f91" />
    <rect x="0" y="7" width="18" height="18" rx="2" fill="#185abd" />
    <path d="m4 12 2.500 8L9 13l2.500 7L14 12" fill="none" stroke="#fff" strokeWidth="1.800" />
  </svg>
);

const WeatherIcon = () => (
  <svg width="43" height="46" viewBox="0 0 43 46">
    <defs>
      <linearGradient id="sun" x1="0" y1="0" x2="1" y2="1">
        <stop offset="0" stopColor="#efb736" />
        <stop offset=".7" stopColor="#f26f10" />
      </linearGradient>
    </defs>
    <circle cx="18" cy="27" r="15" fill="url(#sun)" />
  </svg>
);

const CloudAlertIcon = () => (
  <svg width="26" height="24" viewBox="0 0 26 24">
    <path d="M8 19H6A5 5 0 0 1 5.500 9 7 7 0 0 1 18 6c2 .5 3.500 2 4 4L12 16Z" fill="#a9a9a9" />
    <path d="M8 19H6A5 5 0 0 1 5.500 9 7 7 0 0 1 18 6c2 .5 3 1.500 3.500 3" fill="none" stroke="#1a1a1a" strokeWidth="1.800" />
    <circle cx="18" cy="16.500" r="7" fill="#fbe300" />
    <path d="M18 12.500V17M18 19v1.500" stroke="#1a1a1a" strokeWidth="1.800" />
  </svg>
);

const WifiIcon = () => (
  <svg width="25" height="19" viewBox="0 0 25 19" fill="none" stroke="#1a1a1a" strokeWidth="1.900" strokeLinecap="round">
    <path d="M1.500 7a15.500 15.500 0 0 1 22 0M5 10.500a10.600 10.600 0 0 1 15 0M8.500 13.700a5.700 5.700 0 0 1 8 0" />
    <circle cx="12.500" cy="16.500" r="1" />
  </svg>
);

const SpeakerIcon = () => (
  <svg width="25" height="20" viewBox="0 0 25 20" fill="none" stroke="#1a1a1a" strokeWidth="1.700" strokeLinecap="round" strokeLinejoin="round">
    <path d="M1 7h4l5-5v16l-5-5H1Z" />
    <path d="M13.500 7q2 3 0 6M16.500 4q4.500 6 0 12" />
    <path d="M20 2q6 8 0 16" stroke="#bdbdbd" />
  </svg>
);

const BatteryIcon = () => (
  <svg width="25" height="20" viewBox="0 0 25 20">
    <rect x="1" y="5" width="20" height="13" rx="3" fill="none" stroke="#1a1a1a" strokeWidth="1.700" />
    <path d="M4 8h14v7H4z" fill="#1a1a1a" />
    <path d="M22 9h1.500q1 0 1 1v3q0 1-1 1H22Z" fill="#1a1a1a" />
    <path d="M5-.5 0 6.500h3L2 12l6-7H5Z" fill="#1a1a1a" stroke="#eee" strokeWidth=".8" />
  </svg>
);

const CheckMark = () => (
  <svg width="14" height="12" viewBox="0 0 14 12">
    <path d="m2 6 3.500 3.500L12 2.500" fill="none" stroke="#fff" strokeWidth="2.200" />
  </svg>
);

const RecordDot = () => (
  <svg width="10" height="10" viewBox="0 0 10 10">
    <circle cx="5" cy="5" r="4.500" fill="#fff" />
  </svg>
);

/* ---------- data ---------- */

const tabs = [
  { id: "pma", title: "localhost / 127.0.0.1 / crud_laravel", icon: <PmaIcon />, fade: true, divider: true },
  { id: "git", title: "panipanpan2006/crud-app:", icon: <FaGithub size={24} color="#24262e" />, extra: <BooksIcon /> },
  { id: "edit", title: "Edit Dosen", icon: <GlobeIcon color="#5b5f66" land="#fbf8ff" />, active: true },
  { id: "sso", title: "SSO - Dashboard", icon: <CrestIcon />, divider: true },
];

const bookmarks = [
  { name: "SSO", icon: <CrestIcon /> },
  { name: "Gmail", icon: <GmailIcon /> },
  { name: "Spdsht", icon: <SheetIcon /> },
  { name: "Gdocs", icon: <DocIcon /> },
  { name: "OneDrive Undip", icon: <OneDriveIcon /> },
  { name: "04 - DATA LOGGER...", icon: <DriveIcon />, capped: true },
  { name: "Gemini Pro", icon: <GeminiIcon /> },
  { name: "PDTL", icon: <DriveIcon /> },
  { name: "PBASDAT", icon: <DriveIcon /> },
  { name: "PDSM", icon: <DriveIcon /> },
  { name: "Sitita", icon: <GlobeIcon color="#3f4347" land="#fbf8ff" /> },
  { name: "SALMA", icon: <SalmaIcon /> },
  { name: "Aplikasi Crack", icon: <CrackIcon /> },
];

const courses = [
  { name: "Repudiandae molestias", sks: 3 },
  { name: "Deleniti nulla", sks: 2 },
  { name: "Sit accusantium", sks: 4 },
];

type TaskApp = { name: string; icon: React.ReactNode; running?: boolean; active?: boolean; badge?: React.ReactNode };

const apps: TaskApp[] = [
  { name: "Start", icon: <WindowsLogo /> },
  { name: "Search", icon: <SearchLogo /> },
  { name: "Task view", icon: <TaskViewLogo /> },
  { name: "Copilot", icon: <CopilotLogo /> },
  { name: "File Explorer", icon: <ExplorerLogo />, running: true },
  { name: "Microsoft Store", icon: <StoreLogo /> },
  { name: "Firefox", icon: <FirefoxLogo /> },
  { name: "Edge", icon: <EdgeLogo />, running: true },
  { name: "Chrome", icon: <ChromeLogo />, running: true, active: true },
  { name: "Spotify", icon: <SpotifyLogo />, running: true },
  { name: "Discord", icon: <DiscordLogo />, running: true, badge: <Badge $color="#ee5a5a"><RecordDot /></Badge> },
  { name: "Teams", icon: <TeamsLogo />, running: true, badge: <Badge $color="#13a10e"><CheckMark /></Badge> },
  { name: "XAMPP", icon: <XamppLogo />, running: true },
  { name: "Terminal", icon: <TerminalLogo />, running: true },
  { name: "Visual Studio Code", icon: <CodeLogo />, running: true },
  { name: "WhatsApp", icon: <WhatsappLogo />, running: true, badge: <Badge $color="#0078d4" $wide>22</Badge> },
  { name: "Word", icon: <WordLogo />, running: true },
];

/* ---------- sections ---------- */

function BrowserFrame() {
  const [address, setAddress] = useState("127.0.0.1:8000/dosen/1/edit");
  return (
    <>
      <TabStrip>
        <TabSearch aria-label="Search tabs"><MdKeyboardArrowDown size={22} /></TabSearch>
        {tabs.map((tab) => (
          <TabSlot key={tab.id}>
            <TabBody $active={tab.active}>
              <TabIcon>{tab.icon}</TabIcon>
              <TabTitle $fade={tab.fade}>
                {tab.title}
                {tab.extra}
              </TabTitle>
              <CloseTab aria-label={`Close ${tab.title}`}><MdClose size={20} /></CloseTab>
            </TabBody>
            {tab.divider && <TabDivider />}
          </TabSlot>
        ))}
        <NewTab aria-label="New tab"><MdAdd size={24} /></NewTab>
        <WindowControls>
          <WindowButton aria-label="Minimize">
            <svg width="16" height="16" viewBox="0 0 16 16"><path d="M0 8h16" stroke="#000" strokeWidth="2" /></svg>
          </WindowButton>
          <WindowButton aria-label="Restore">
            <svg width="16" height="16" viewBox="0 0 16 16" fill="none" stroke="#000" strokeWidth="1.700">
              <rect x="1" y="4" width="11" height="11" rx="2" />
              <path d="M4 1h8q3 0 3 3v8" />
            </svg>
          </WindowButton>
          <WindowButton aria-label="Close">
            <svg width="16" height="16" viewBox="0 0 16 16"><path d="m.5.5 15 15m0-15-15 15" stroke="#000" strokeWidth="1.700" /></svg>
          </WindowButton>
        </WindowControls>
      </TabStrip>
      <BrowserPanel>
        <BrowserPanelInner>
          <Toolbar>
            <ToolButton aria-label="Back"><MdArrowBack size={25} /></ToolButton>
            <ToolButton aria-label="Forward" $dim><MdArrowForward size={25} /></ToolButton>
            <ToolButton aria-label="Reload"><MdRefresh size={26} /></ToolButton>
            <Omnibox onSubmit={(e) => e.preventDefault()}>
              <SiteInfo type="button" aria-label="Site information"><MdInfoOutline size={24} /></SiteInfo>
              <Address aria-label="Address" value={address} onChange={(e) => setAddress(e.target.value)} />
              <OmniButton type="button" aria-label="Zoom"><MdOutlineZoomOut size={26} /></OmniButton>
              <OmniButton type="button" aria-label="Bookmark this page"><MdStarBorder size={27} /></OmniButton>
            </Omnibox>
            <SmallToolButton aria-label="Extensions">
              <svg width="26" height="26" viewBox="0 0 26 26" fill="none" stroke="#47465a" strokeWidth="2.400">
                <path d="M3 5h18v18H3v-5c4-1 4-7 0-8Z" strokeLinejoin="round" />
                <path d="M9.500 4.500a2.500 2.500 0 0 1 5 0ZM21.500 11.500a2.500 2.500 0 0 1 0 5Z" fill="#47465a" strokeWidth="1" />
              </svg>
            </SmallToolButton>
            <BarDivider $before={13} $after={24} />
            <ProfileButton aria-label="Profile"><ProfilePhoto /></ProfileButton>
            <SmallToolButton aria-label="Menu"><MdMoreVert size={28} /></SmallToolButton>
          </Toolbar>
          <BookmarkBar aria-label="Bookmarks">
            <AppsGridIcon />
            <BarDivider $before={21} $after={21} />
            <BookmarkList>
              {bookmarks.map((b) => (
                <li key={b.name}>
                  <BookmarkLink href="#" $capped={b.capped}>
                    <BookmarkIcon>{b.icon}</BookmarkIcon>
                    {b.name}
                  </BookmarkLink>
                </li>
              ))}
            </BookmarkList>
            <button aria-label="More bookmarks"><MdKeyboardDoubleArrowRight size={24} /></button>
          </BookmarkBar>
        </BrowserPanelInner>
      </BrowserPanel>
    </>
  );
}

function EditPage() {
  const [name, setName] = useState("Gaston Mann");
  const [email, setEmail] = useState("dayna.beatty@example.com");
  return (
    <Page>
      <SiteNav>
        <SiteNavInner>
          <Brand href="#"><FaGraduationCap size={26} />Edit Dosen</Brand>
          <NavLinks>
            <li><NavLink href="#"><FaHouse size={14} />Dashboard</NavLink></li>
            <li><NavLink href="#"><FaChalkboardUser size={15} />Dosen</NavLink></li>
            <li><NavLink href="#"><FaBook size={12} />Mata Kuliah</NavLink></li>
          </NavLinks>
        </SiteNavInner>
      </SiteNav>
      <Main>
        <BackLink href="#"><FaArrowLeft size={13} />Kembali ke Daftar Dosen</BackLink>
        <PageHeader>
          <Avatar>G</Avatar>
          <div>
            <Title>Edit Dosen</Title>
            <Subtitle>Perbarui informasi untuk <strong>Gaston Mann</strong></Subtitle>
          </div>
        </PageHeader>

        <StatsBar>
          <Stat>
            <StatIcon><FaBook size={20} /></StatIcon>
            <div><StatLabel>Mata Kuliah</StatLabel><StatValue $large>3 MK</StatValue></div>
          </Stat>
          <Stat>
            <StatIcon><FaEnvelope size={20} /></StatIcon>
            <div><StatLabel>Email Terdaftar</StatLabel><StatValue>dayna.beatty@example...</StatValue></div>
          </Stat>
          <Stat>
            <StatIcon><FaCalendar size={20} /></StatIcon>
            <div><StatLabel>Bergabung</StatLabel><StatValue>06 Oct 2025</StatValue></div>
          </Stat>
        </StatsBar>

        <Columns>
          <FormCard onSubmit={(e) => e.preventDefault()}>
            <CardTitle><FaPenToSquare size={17} color="#3b82f6" />Form Edit Data</CardTitle>
            <Field>
              <FieldLabel htmlFor="nama">
                <FaUser size={12} color="#3b82f6" />
                <span>Nama Lengkap <Required>*</Required></span>
              </FieldLabel>
              <TextInput id="nama" value={name} onChange={(e) => setName(e.target.value)} />
              <Help><FaCircleInfo size={10} />Nama hanya boleh berisi huruf dan spasi</Help>
            </Field>
            <Field>
              <FieldLabel htmlFor="email">
                <FaEnvelope size={12} color="#3b82f6" />
                <span>Email <Required>*</Required></span>
              </FieldLabel>
              <TextInput id="email" type="email" value={email} onChange={(e) => setEmail(e.target.value)} />
              <Help><FaCircleInfo size={10} />Email harus valid dan belum terdaftar</Help>
            </Field>
            <Actions>
              <ActionButton type="submit" $primary><FaFloppyDisk size={13} />Update Data</ActionButton>
              <ActionButton type="button"><FaXmark size={13} />Batal</ActionButton>
            </Actions>
          </FormCard>

          <SideCard>
            <SideTitle><FaList size={15} color="#a855f7" />Mata Kuliah Diampu</SideTitle>
            <CourseList>
              {courses.map((c) => (
                <Course key={c.name}>
                  <CourseIcon><FaBook size={10} /></CourseIcon>
                  <div>
                    <CourseName>{c.name}</CourseName>
                    <Credits><FaAward size={10} />{c.sks} SKS</Credits>
                  </div>
                </Course>
              ))}
            </CourseList>
          </SideCard>
        </Columns>

        <Warning>
          <WarningIcon><FaTriangleExclamation size={17} /></WarningIcon>
          <div>
            <WarningTitle><WarningEmoji />Peringatan Penting:</WarningTitle>
            <ul>
              <li>• Perubahan email akan mempengaruhi login jika dosen ini memiliki akun</li>
              <li>• Pastikan email yang baru valid dan dapat dihubungi</li>
              <li>• Semua mata kuliah yang diampu akan tetap terkait dengan dosen ini</li>
            </ul>
          </div>
        </Warning>
      </Main>
    </Page>
  );
}

function DesktopTaskbar() {
  return (
    <Taskbar>
      <WidgetArea>
        <WidgetButton aria-label="Widgets">
          <WeatherIcon />
          <WidgetBadge $color="#c42b1c">2</WidgetBadge>
        </WidgetButton>
      </WidgetArea>
      <AppList>
        {apps.map((app) => (
          <AppSlot key={app.name}>
            <AppButton aria-label={app.name} $active={app.active}>
              {app.icon}
              {app.badge}
              {app.running && <Indicator $active={app.active} />}
            </AppButton>
          </AppSlot>
        ))}
      </AppList>
      <Tray>
        <TrayButton $width={48} aria-label="Hidden icons">
          <svg width="18" height="10" viewBox="0 0 18 10"><path d="m1.500 9 7.500-7.500L16.500 9" fill="none" stroke="#1a1a1a" strokeWidth="1.800" /></svg>
        </TrayButton>
        <TrayButton $width={46} aria-label="OneDrive"><CloudAlertIcon /></TrayButton>
        <TrayText $width={72}>ENG<br />US</TrayText>
        <TrayButton $width={40} aria-label="Network"><WifiIcon /></TrayButton>
        <TrayButton $width={36} aria-label="Volume"><SpeakerIcon /></TrayButton>
        <TrayButton $width={36} aria-label="Battery"><BatteryIcon /></TrayButton>
        <TrayText $width={110} $end>10:27<br />06/10/2025</TrayText>
      </Tray>
    </Taskbar>
  );
}

export default function App() {
  return (
    <Screen>
      <GlobalStyle />
      <BrowserFrame />
      <EditPage />
      <DesktopTaskbar />
    </Screen>
  );
}
